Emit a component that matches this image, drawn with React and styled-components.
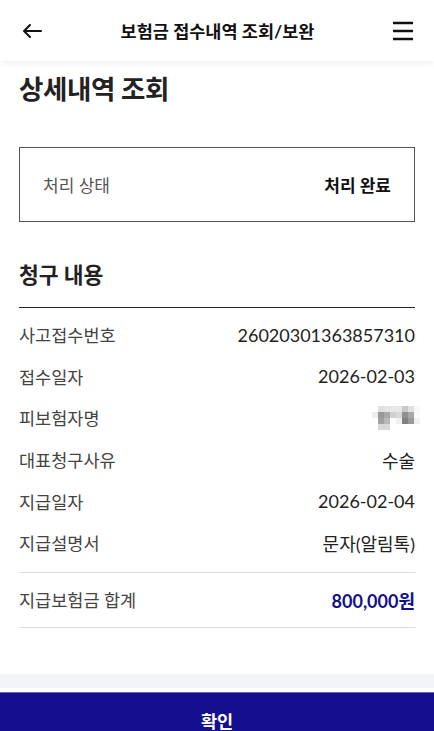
import styled, { createGlobalStyle } from "styled-components"

const GlobalStyle = createGlobalStyle`
  * { box-sizing: border-box; }
  html, body { margin: 0; padding: 0; background: #fff; }
  body {
    font-family: Lato, "Noto Sans CJK KR", sans-serif;
    color: #222;
    -webkit-font-smoothing: antialiased;
  }
`;

const Page = styled.div`
  width: 100%;
  min-height: 100vh;
  display: flex;
  flex-direction: column;
  background: #fff;
`;

const Header = styled.header`
  height: 61px;
  display: flex;
  align-items: center;
  justify-content: space-between;
  padding: 0 20px 0 21px;
  background: #fff;
  box-shadow: 0 3px 6px rgba(0, 0, 0, 0.05);
  position: relative;
  z-index: 1;
`;

const IconButton = styled.button`
  width: 22px;
  height: 22px;
  padding: 0;
  border: 0;
  background: none;
  display: flex;
  align-items: center;
  justify-content: center;
`;

const HeaderTitle = styled.h1`
  margin: 0;
  font-size: 17.5px;
  font-weight: 700;
  color: #111;
`;

const Content = styled.main`
  padding: 12px 19px 0;
`;

const PageTitle = styled.h2`
  margin: 0;
  font-size: 26.5px;
  font-weight: 700;
  color: #222;
  line-height: 32px;
  letter-spacing: -0.4px;
`;

const StatusBox = styled.div`
  margin-top: 42px;
  height: 75px;
  border: 1px solid #555;
  display: flex;
  align-items: center;
  justify-content: space-between;
  padding: 0 23px;
`;

const StatusLabel = styled.span`
  font-size: 17px;
  color: #555;
`;

const StatusValue = styled.span`
  font-size: 17px;
  font-weight: 700;
  color: #111;
`;

const SectionTitle = styled.h3`
  margin: 38px 0 0;
  font-size: 21.5px;
  font-weight: 700;
  color: #222;
  line-height: 30px;
  padding-bottom: 17px;
  border-bottom: 1.5px solid #222;
`;

const List = styled.dl`
  margin: 0;
  padding: 6px 0 8px;
  border-bottom: 1px solid #ddd;
`;

const Row = styled.div`
  height: 41.6px;
  display: flex;
  align-items: center;
  justify-content: space-between;
`;

const Label = styled.dt`
  font-size: 17.5px;
  color: #444;
`;

const Value = styled.dd`
  margin: 0;
  font-size: 18px;
  color: ${p => (p.$accent ? "#12108a" : "#222")};
  font-weight: ${p => (p.$accent ? 700 : 400)};
`;

const TotalRow = styled(Row)`
  height: 55px;
  border-bottom: 1px solid #ddd;
`;

const Mosaic = styled.div`
  display: grid;
  grid-template-columns: repeat(8, 6px);
  grid-auto-rows: 6px;
  margin-right: -5px;
`;

const Cell = styled.span`
  background: ${p => p.$c};
`;

const GrayBand = styled.div`
  margin-top: 46px;
  height: 14px;
  background: #f3f4f8;
`;

const ConfirmButton = styled.button`
  margin-top: 4px;
  height: 56px;
  width: 100%;
  border: 0;
  border-top: 1px solid #6a68c0;
  background: #140f8f;
  color: #fff;
  font-family: Lato, "Noto Sans CJK KR", sans-serif;
  font-size: 17.5px;
  font-weight: 700;
`;

const mosaic = [
  ["#fff", "#e0e0e0", "#e4e4e4", "#e8e8e8", "#e8e8e8", "#c8c8c8", "#e0e0e0", "#f8f8f8"],
  ["#ececec", "#999", "#aaa", "#d0d0d0", "#d8d8d8", "#909090", "#a8a8a8", "#fafafa"],
  ["#fff", "#a0a0a0", "#b8b8b8", "#fff", "#f0f0f0", "#808080", "#999", "#f0f0f0"],
  ["#fff", "#d8d8d8", "#d8d8d8", "#fff", "#fff", "#fff", "#fff", "#fff"],
];

const rows = [
  ["사고접수번호", "26020301363857310"],
  ["접수일자", "2026-02-03"],
  ["피보험자명", null],
  ["대표청구사유", "수술"],
  ["지급일자", "2026-02-04"],
  ["지급설명서", "문자(알림톡)"],
];

const App = () => {
  return (
    <Page>
      <GlobalStyle />
      <Header>
        <IconButton aria-label="뒤로">
          <svg width="20" height="16" viewBox="0 0 20 16" fill="none" stroke="#111" strokeWidth="2" strokeLinecap="round" strokeLinejoin="round">
            <path d="M19 8H2M8 2L2 8l6 6" />
          </svg>
        </IconButton>
        <HeaderTitle>보험금 접수내역 조회/보완</HeaderTitle>
        <IconButton aria-label="메뉴">
          <svg width="22" height="20" viewBox="0 0 22 20" fill="none" stroke="#111" strokeWidth="2.4">
            <path d="M1 2h20M1 10h20M1 18h20" />
          </svg>
        </IconButton>
      </Header>
      <Content>
        <PageTitle>상세내역 조회</PageTitle>
        <StatusBox>
          <StatusLabel>처리 상태</StatusLabel>
          <StatusValue>처리 완료</StatusValue>
        </StatusBox>
        <SectionTitle>청구 내용</SectionTitle>
        <List>
          {rows.map(([label, value]) => (
            <Row key={label}>
              <Label>{label}</Label>
              {value ? (
                <Value>{value}</Value>
              ) : (
                <Mosaic>
                  {mosaic.flat().map((c, i) => <Cell key={i} $c={c} />)}
                </Mosaic>
              )}
            </Row>
          ))}
        </List>
        <TotalRow>
          <Label>지급보험금 합계</Label>
          <Value $accent>800,000원</Value>
        </TotalRow>
      </Content>
      <GrayBand />
      <ConfirmButton>확인</ConfirmButton>
    </Page>
  )
};

export default App;
